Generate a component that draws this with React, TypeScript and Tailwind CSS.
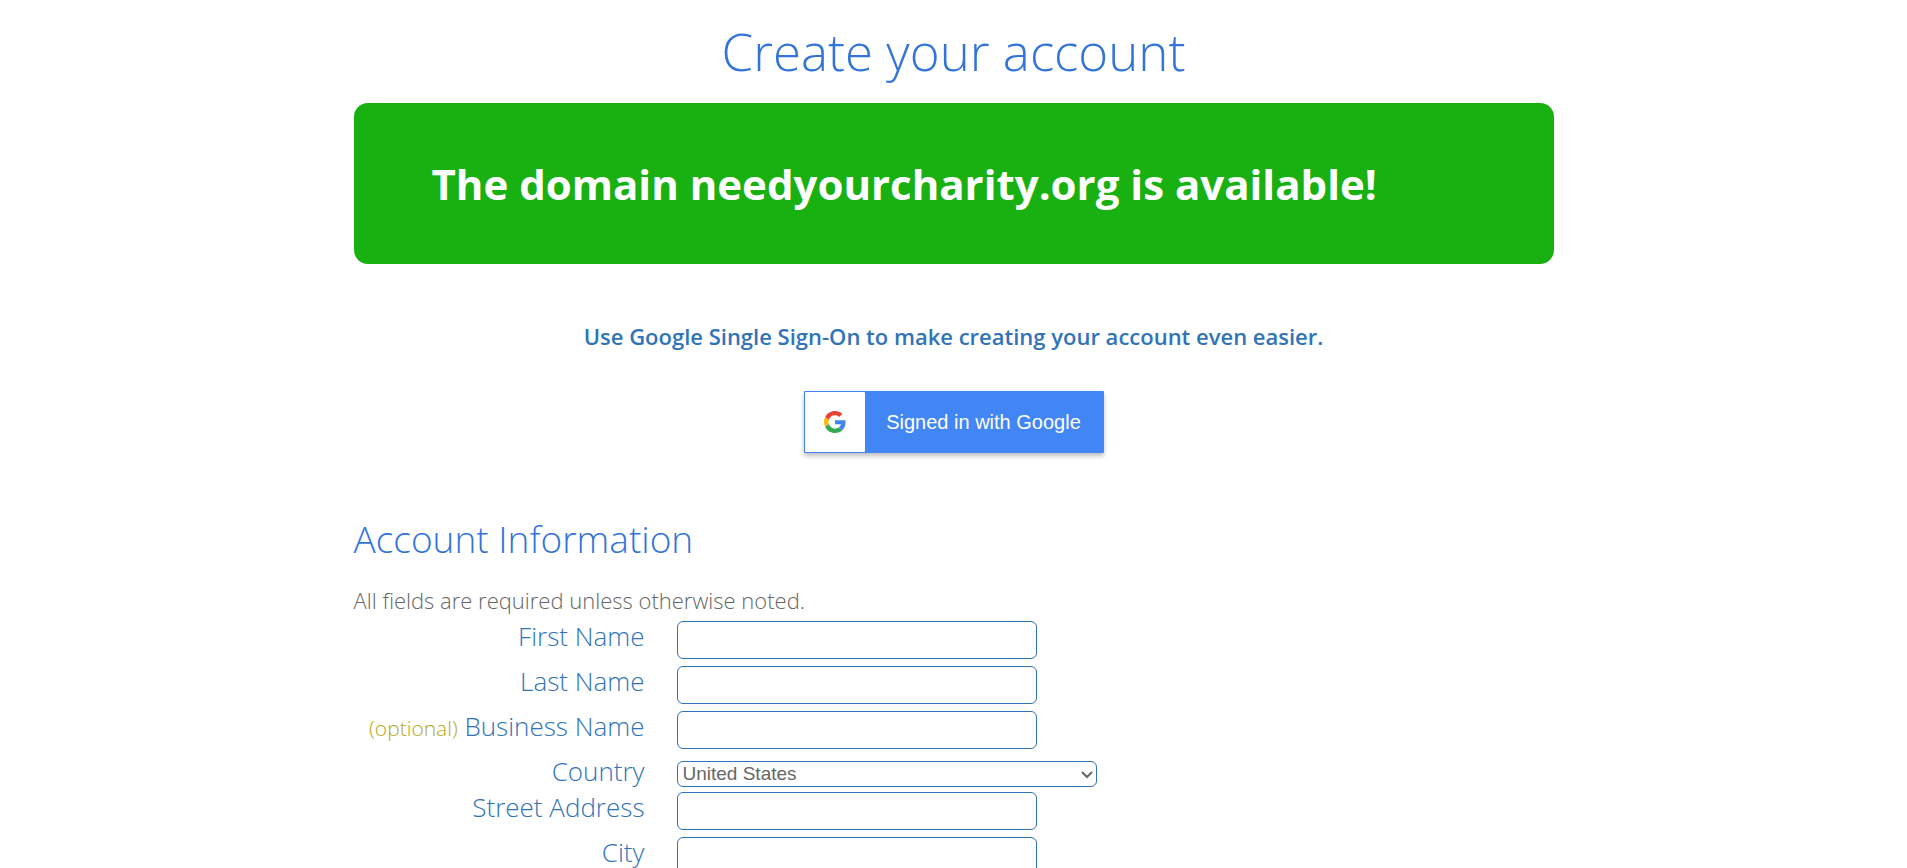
import { useState } from "react";

interface Field {
  id: string;
  label: string;
  optional?: boolean;
  options?: string[];
}

const fields: Field[] = [
  { id: "firstName", label: "First Name" },
  { id: "lastName", label: "Last Name" },
  { id: "businessName", label: "Business Name", optional: true },
  { id: "country", label: "Country", options: ["United States", "Canada", "United Kingdom"] },
  { id: "streetAddress", label: "Street Address" },
  { id: "city", label: "City" },
];

function GoogleLogo() {
  return (
    <svg viewBox="0 0 48 48" className="h-[22px] w-[22px]" aria-hidden="true">
      <path
        fill="#EA4335"
        d="M24 9.5c3.54 0 6.71 1.22 9.21 3.6l6.85-6.85C35.9 2.38 30.47 0 24 0 14.62 0 6.51 5.38 2.56 13.22l7.98 6.19C12.43 13.72 17.74 9.5 24 9.5z"
      />
      <path
        fill="#4285F4"
        d="M46.98 24.55c0-1.57-.15-3.09-.38-4.55H24v9.02h12.94c-.58 2.96-2.26 5.48-4.78 7.18l7.73 6c4.51-4.18 7.09-10.36 7.09-17.65z"
      />
      <path
        fill="#FBBC05"
        d="M10.53 28.59c-.48-1.45-.76-2.99-.76-4.59s.27-3.14.76-4.59l-7.98-6.19C.92 16.46 0 20.12 0 24c0 3.88.92 7.54 2.56 10.78l7.97-6.19z"
      />
      <path
        fill="#34A853"
        d="M24 48c6.48 0 11.93-2.13 15.89-5.81l-7.73-6c-2.15 1.45-4.92 2.3-8.16 2.3-6.26 0-11.57-4.22-13.47-9.91l-7.98 6.19C6.51 42.62 14.62 48 24 48z"
      />
    </svg>
  );
}

function FormRow({ field }: { field: Field }) {
  const [value, setValue] = useState(field.options ? field.options[0] : "");

  return (
    <div className="flex items-start">
      <label
        htmlFor={field.id}
        className="w-[291px] shrink-0 whitespace-nowrap text-right text-[26px] leading-[30px] text-[#3173b9]"
      >
        {field.optional && (
          <>
            <span className="text-[21px] text-[#b5a81c]">(optional)</span>{" "}
          </>
        )}
        {field.label}
      </label>
      {field.options ? (
        <div className="relative my-[5px] ml-8 w-full max-w-[420px]">
          <select
            id={field.id}
            value={value}
            onChange={(e) => setValue(e.target.value)}
            className="block h-[26px] w-full appearance-none rounded-md border border-[#3173b9] bg-white pr-6 pl-[5px] font-['Liberation_Sans',Arial,sans-serif] text-[19px] leading-6 font-normal text-[#666]"
          >
            {field.options.map((option) => (
              <option key={option}>{option}</option>
            ))}
          </select>
          <svg
            viewBox="0 0 12 8"
            className="pointer-events-none absolute top-[10px] right-1 h-2 w-3"
            aria-hidden="true"
          >
            <path d="M1 1l5 5 5-5" fill="none" stroke="#666" strokeWidth="2" />
          </svg>
        </div>
      ) : (
        <input
          id={field.id}
          type="text"
          value={value}
          onChange={(e) => setValue(e.target.value)}
          className="mb-[7px] ml-8 h-[38px] w-full max-w-[360px] rounded-md border border-[#3173b9] bg-white px-2 text-[19px] text-[#666]"
        />
      )}
    </div>
  );
}

export default function App() {
  return (
    <main className="mx-auto max-w-[1200px] bg-white font-['Open_Sans',sans-serif] font-light text-[#666]">
      <h1 className="pt-4 text-center text-[51px] leading-[71px] text-[#3374d8]">
        Create your account
      </h1>

      {/* Domain banner */}
      <div className="mt-4 rounded-[14px] bg-[#19b012] px-[78px] py-[52px]">
        <p className="text-[42px] leading-[57px] font-bold text-white">
          The domain needyourcharity.org is available!
        </p>
      </div>

      {/* Single sign-on */}
      <div className="flex flex-col items-center pt-14">
        <p className="text-[22px] leading-8 font-semibold text-[#3173b9]">
          Use Google Single Sign-On to make creating your account even easier.
        </p>
        <button
          type="button"
          className="mt-[39px] flex h-[62px] w-[300px] items-center rounded-[1px] bg-[#4285f4] p-px shadow-[0_3px_4px_0_rgba(0,0,0,0.25)]"
        >
          <span className="flex h-[60px] w-[60px] shrink-0 items-center justify-center rounded-[1px] bg-white">
            <GoogleLogo />
          </span>
          <span className="flex-1 text-center font-['Liberation_Sans',Arial,sans-serif] text-[20px] font-normal text-white">
            Signed in with Google
          </span>
        </button>
      </div>

      {/* Account form */}
      <form className="pt-[59px]">
        <h2 className="text-[37px] leading-[54px] text-[#3374d8]">Account Information</h2>
        <p className="mt-[18px] text-[22px] leading-8">
          All fields are required unless otherwise noted.
        </p>
        <div className="mt-[5px]">
          {fields.map((field) => (
            <FormRow key={field.id} field={field} />
          ))}
        </div>
      </form>
    </main>
  );
}
